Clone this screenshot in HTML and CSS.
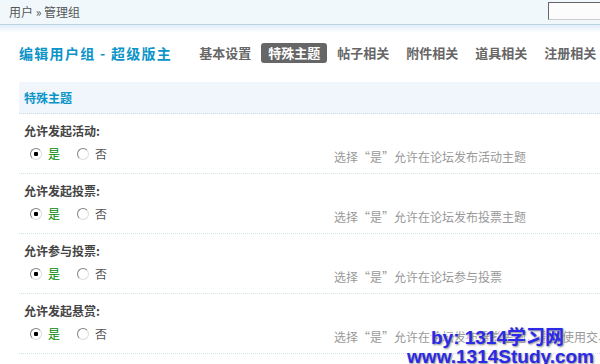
FILE: index.html
```html
<!DOCTYPE html>
<html lang="zh-CN">
<head>
    <meta charset="UTF-8">
    <title>编辑用户组 - 超级版主</title>
    <link rel="stylesheet" href="styles.css">
</head>
<body>
    <div class="topbar">
        <span class="crumbs">用户 &raquo; 管理组</span>
        <input class="search" type="text">
    </div>
    <div class="band"></div>

    <div class="header">
        <h2>编辑用户组 - 超级版主</h2>
        <ul class="tabs">
            <li>基本设置</li>
            <li class="current">特殊主题</li>
            <li>帖子相关</li>
            <li>附件相关</li>
            <li>道具相关</li>
            <li>注册相关</li>
        </ul>
    </div>

    <div class="section">
        <div class="section-title">特殊主题</div>

        <div class="row">
            <div class="field">
                <div class="label">允许发起活动:</div>
                <div class="choices">
                    <label><input type="radio" name="activity" checked><span class="yes">是</span></label>
                    <label><input type="radio" name="activity"><span>否</span></label>
                </div>
            </div>
            <div class="tip">选择“是”允许在论坛发布活动主题</div>
        </div>

        <div class="row">
            <div class="field">
                <div class="label">允许发起投票:</div>
                <div class="choices">
                    <label><input type="radio" name="poll" checked><span class="yes">是</span></label>
                    <label><input type="radio" name="poll"><span>否</span></label>
                </div>
            </div>
            <div class="tip">选择“是”允许在论坛发布投票主题</div>
        </div>

        <div class="row">
            <div class="field">
                <div class="label">允许参与投票:</div>
                <div class="choices">
                    <label><input type="radio" name="vote" checked><span class="yes">是</span></label>
                    <label><input type="radio" name="vote"><span>否</span></label>
                </div>
            </div>
            <div class="tip">选择“是”允许在论坛参与投票</div>
        </div>

        <div class="row">
            <div class="field">
                <div class="label">允许发起悬赏:</div>
                <div class="choices">
                    <label><input type="radio" name="reward" checked><span class="yes">是</span></label>
                    <label><input type="radio" name="reward"><span>否</span></label>
                </div>
            </div>
            <div class="tip">选择“是”允许在论坛发布悬赏主题，悬赏使用交易积分</div>
        </div>
    </div>

    <div class="watermark">
        <div>by: 1314学习网</div>
        <div>www.1314Study.com</div>
    </div>
</body>
</html>
```

FILE: styles.css
```css
body {
    margin: 0;
    width: 600px;
    height: 364px;
    overflow: hidden;
    position: relative;
    font-family: "Noto Sans CJK SC", "Liberation Sans", sans-serif;
    font-size: 12px;
    color: #555;
    background: #fff;
}
.topbar {
    height: 24px;
    background-color: #f0f8fc;
    border-bottom: 1px solid #b8d4e0;
    display: flex;
    align-items: center;
    justify-content: space-between;
    padding-left: 9px;
}
.crumbs {
    color: #555;
    line-height: 24px;
}
.search {
    width: 60px;
    height: 18px;
    box-sizing: border-box;
    margin: 0 -8px 2px 0;
    border: 1px solid #ccc;
    border-top-color: #666;
    border-left-color: #666;
    background: #fbfcfb;
    padding: 0;
}
.band {
    height: 8px;
    background: linear-gradient(#e2eef8, #fff);
}
.header {
    display: flex;
    align-items: center;
    padding: 10px 0 0 19px;
    height: 20px;
    white-space: nowrap;
}
.header h2 {
    margin: 0;
    font-size: 14px;
    font-weight: bold;
    letter-spacing: 1.3px;
    color: #0a94c8;
    line-height: 20px;
}
.tabs {
    display: flex;
    gap: 3px;
    list-style: none;
    margin: 0 0 0 20px;
    padding: 0;
}
.tabs li {
    padding: 0 7px;
    font-size: 13px;
    font-weight: bold;
    color: #666;
    line-height: 20px;
    border-radius: 3px;
}
.tabs li.current {
    background-color: #666;
    color: #fff;
}
.section {
    margin: 19px 0 0 19px;
}
.section-title {
    height: 31px;
    line-height: 31px;
    padding-left: 5px;
    background-color: #f0f6fc;
    border-bottom: 1px dotted #c8dce6;
    color: #0a94c8;
    font-weight: bold;
}
.row {
    display: grid;
    grid-template-columns: 310px 1fr;
    padding: 10px 0 12px 5px;
    border-bottom: 1px dotted #d4e2ea;
    white-space: nowrap;
}
.label {
    font-weight: bold;
    color: #444;
    height: 14px;
    line-height: 14px;
}
.choices {
    display: flex;
    margin-top: 9px;
    padding-left: 6px;
    height: 14px;
    line-height: 14px;
}
.choices label {
    display: flex;
    align-items: center;
    width: 47px;
}
.choices input {
    appearance: none;
    width: 12px;
    height: 12px;
    margin: 0 6px 0 0;
    border: 1px solid #ddd;
    border-top-color: #808080;
    border-left-color: #808080;
    border-radius: 50%;
    background: #fff;
    box-sizing: border-box;
}
.choices input:checked {
    background: radial-gradient(circle, #000 0 2px, #fff 2.5px);
}
.yes {
    color: #080;
}
.tip {
    color: #999;
    padding-top: 26px;
    margin-bottom: -3px;
    line-height: 14px;
    overflow: hidden;
}
.watermark {
    position: absolute;
    right: 6px;
    bottom: -2px;
    font-family: "Liberation Sans", "Noto Sans CJK SC", sans-serif;
    font-size: 19px;
    font-weight: bold;
    line-height: 19px;
    color: #2a2ae8;
    text-align: right;
    text-shadow: 1px 1px 2px #888, -1px -1px 1px #fff;
}
.watermark div:first-child {
    margin-right: 30px;
}
```
